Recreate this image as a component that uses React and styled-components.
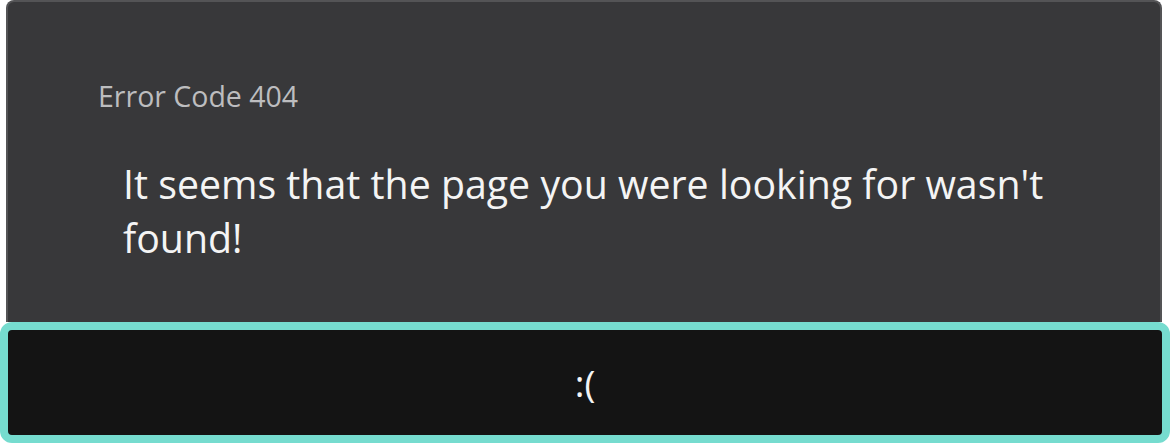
import React from "react";
import styled, { createGlobalStyle } from "styled-components";

const Global = createGlobalStyle`
  html, body {
    margin: 0;
    padding: 0;
    background: #ffffff;
    font-family: "Open Sans", "Noto Sans", sans-serif;
  }
`;

const Page = styled.div`
  display: flex;
  flex-direction: column;
  width: 1170px;
  height: 443px;
`;

const Card = styled.div`
  box-sizing: border-box;
  margin: 0 8px 0 6px;
  height: 322px;
  background: #38383a;
  border: 2px solid #545456;
  border-bottom: none;
  border-radius: 8px 8px 0 0;
  padding: 75px 0 0 90px;
`;

const Code = styled.div`
  font-size: 28.5px;
  line-height: 38px;
  color: #bdbdbf;
`;

const Message = styled.p`
  margin: 42px 0 0 25px;
  max-width: 1000px;
  font-size: 39.3px;
  line-height: 54px;
  color: #f4f4f4;
`;

const Footer = styled.div`
  box-sizing: border-box;
  display: flex;
  align-items: center;
  justify-content: center;
  height: 121px;
  background: #141414;
  border: 8px solid #76dccf;
  border-radius: 12px;
  font-size: 37px;
  color: #f4f4f4;
`;

export default function App() {
  return (
    <Page>
      <Global />
      <Card>
        <Code>Error Code 404</Code>
        <Message>It seems that the page you were looking for wasn't found!</Message>
      </Card>
      <Footer>:(</Footer>
    </Page>
  );
}
